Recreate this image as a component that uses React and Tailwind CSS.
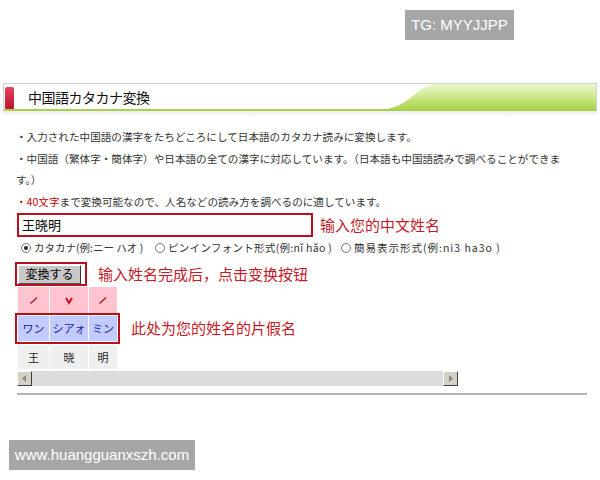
import React from "react";

const jp = { fontFamily: '"Noto Sans CJK JP", "Noto Sans", sans-serif' };
const sc = { fontFamily: '"Noto Sans CJK SC", "Noto Sans", sans-serif' };

function Radio({ checked }) {
  return (
    <span className="inline-flex shrink-0 w-[10px] h-[10px] rounded-full border border-[#777] bg-white items-center justify-center mr-[3px]">
      {checked && <span className="w-[4px] h-[4px] rounded-full bg-[#222]" />}
    </span>
  );
}

function Tone({ kind }) {
  return (
    <svg width="10" height="10" viewBox="0 0 10 10">
      {kind === "v" ? (
        <path d="M2 3 L5 8 L8 3" stroke="#d0101e" strokeWidth="2" fill="none" />
      ) : (
        <path d="M1.5 8.5 L8 2.5" stroke="#c0101e" strokeWidth="1.3" fill="none" />
      )}
    </svg>
  );
}

function HeaderBar() {
  return (
    <div className="mx-[3px]">
      <div className="relative h-[28px] border-t border-x border-[#cfcfcf] bg-white flex items-center overflow-hidden">
        <svg
          className="absolute right-0 top-0"
          width="216"
          height="26"
          viewBox="0 0 216 26"
          preserveAspectRatio="none"
        >
          <defs>
            <linearGradient id="gr" x1="0" y1="0" x2="0" y2="1">
              <stop offset="0" stopColor="#eef8d6" />
              <stop offset="0.35" stopColor="#d6ed9e" />
              <stop offset="1" stopColor="#a9d24a" />
            </linearGradient>
          </defs>
          <path d="M0 26 C28 24 36 4 52 0 L216 0 L216 26 Z" fill="url(#gr)" />
        </svg>
        <div className="relative w-[9px] h-[23px] ml-[1px] mt-[2px] rounded-[2px] bg-gradient-to-b from-[#e8405a] to-[#b8102e]" />
        <span className="relative ml-[14px] text-[14px] text-[#111] tracking-[-0.5px]" style={jp}>
          中国語カタカナ変換
        </span>
        <div className="absolute left-0 right-0 bottom-0 h-[2px] bg-[#a8d04a]" />
      </div>
      <div className="h-[6px] bg-gradient-to-b from-[#eeeeee] to-white" />
    </div>
  );
}

export default function App() {
  return (
    <div className="w-[600px] h-[480px] bg-white flex flex-col overflow-hidden">
      <div className="flex justify-end pt-[10px] pr-[86px]">
        <div
          className="h-[30px] w-[109px] bg-[#a6a6a6] text-white text-[15px] flex items-center justify-center"
          style={{ fontFamily: '"Liberation Sans", Arial, sans-serif' }}
        >
          TG: MYYJJPP
        </div>
      </div>

      <div className="mt-[43px]">
        <HeaderBar />
      </div>

      <div className="pl-[16px] mt-[9px] text-[10.6px] leading-[21.5px] text-[#333] whitespace-nowrap" style={jp}>
        <div>・入力された中国語の漢字をたちどころにして日本語のカタカナ読みに変換します。</div>
        <div>・中国語（繁体字・簡体字）や日本語の全ての漢字に対応しています。（日本語も中国語読みで調べることができま</div>
        <div>す。）</div>
        <div>
          <span className="text-[#cc0000]">・40文字</span>まで変換可能なので、人名などの読み方を調べるのに適しています。
        </div>
      </div>

      <div className="flex items-center ml-[17px] mt-[1px]">
        <div className="w-[296px] h-[24px] border-2 border-[#b8101e] bg-white flex items-center pl-[3px]">
          <span className="text-[13px] text-black" style={sc}>王晓明</span>
        </div>
        <span className="ml-[7px] text-[15px] text-[#c41a2a]" style={sc}>输入您的中文姓名</span>
      </div>

      <div className="flex items-center ml-[21px] mt-[3px] h-[16px] text-[10.5px] text-[#333] whitespace-nowrap" style={jp}>
        <Radio checked />
        <span className="w-[121px] shrink-0">カタカナ(例:ニー ハオ )</span>
        <Radio />
        <span className="w-[173px] shrink-0 tracking-[0.3px]">ピンインフォント形式(例:nǐ hǎo )</span>
        <Radio />
        <span className="shrink-0 tracking-[1px]">簡易表示形式(例:ni3 ha3o )</span>
      </div>

      <div className="flex items-center ml-[15px] mt-[6px]">
        <div className="w-[72px] h-[24px] border-2 border-[#b8101e] bg-white flex items-center pl-[1px]">
          <div
            className="w-[63px] h-[19px] bg-[#c8c8c8] border border-t-white border-l-white border-b-[#555] border-r-[#333] flex items-center justify-center text-[12px] text-black"
            style={jp}
          >
            変換する
          </div>
        </div>
        <span className="ml-[11px] text-[15px] text-[#c41a2a]" style={sc}>输入姓名完成后，点击变换按钮</span>
      </div>

      <div className="ml-[18px] mt-[1px] flex gap-px h-[26px]">
        <div className="w-[31px] bg-[#ffc4cf] flex items-center justify-center"><Tone /></div>
        <div className="w-[38px] bg-[#ffc4cf] flex items-center justify-center"><Tone kind="v" /></div>
        <div className="w-[28px] bg-[#ffc4cf] flex items-center justify-center"><Tone /></div>
      </div>

      <div className="flex items-center ml-[15px]">
        <div className="w-[105px] h-[31px] border-2 border-[#b8101e] p-px flex gap-px bg-white">
          <div className="w-[31px] bg-[#c4ccff] flex items-center justify-center text-[11px] text-[#1020b0]" style={jp}>ワン</div>
          <div className="w-[38px] bg-[#c4ccff] flex items-center justify-center text-[11px] text-[#1020b0]" style={jp}>シアォ</div>
          <div className="w-[28px] bg-[#c4ccff] flex items-center justify-center text-[11px] text-[#1020b0]" style={jp}>ミン</div>
        </div>
        <span className="ml-[11px] text-[15px] text-[#c41a2a]" style={sc}>此处为您的姓名的片假名</span>
      </div>

      <div className="ml-[18px] mt-[1px] flex gap-px h-[24px] text-[11px] text-[#222]" style={jp}>
        <div className="w-[31px] bg-[#efefef] flex items-center justify-center">王</div>
        <div className="w-[38px] bg-[#efefef] flex items-center justify-center">晓</div>
        <div className="w-[28px] bg-[#efefef] flex items-center justify-center">明</div>
      </div>

      <div className="ml-[17px] mt-[2px] w-[441px] h-[15px] flex bg-[#dcdcdc]">
        <div className="w-[15px] h-[15px] bg-[#d4d0c8] border border-t-white border-l-white border-b-[#404040] border-r-[#404040] flex items-center justify-center">
          <svg width="5" height="7" viewBox="0 0 5 7"><path d="M4 0 L0 3.5 L4 7 Z" fill="#888" /></svg>
        </div>
        <div className="flex-1" />
        <div className="w-[15px] h-[15px] bg-[#d4d0c8] border border-t-white border-l-white border-b-[#404040] border-r-[#404040] flex items-center justify-center">
          <svg width="5" height="7" viewBox="0 0 5 7"><path d="M1 0 L5 3.5 L1 7 Z" fill="#888" /></svg>
        </div>
      </div>

      <div className="ml-[17px] mt-[7px] w-[570px] h-[2px] bg-[#b4b4b4]" />

      <div className="ml-[9px] mt-[45px]">
        <div
          className="w-[186px] h-[30px] bg-[#a6a6a6] text-white text-[15px] flex items-center justify-center"
          style={{ fontFamily: '"Liberation Sans", Arial, sans-serif' }}
        >
          www.huangguanxszh.com
        </div>
      </div>
    </div>
  );
}
